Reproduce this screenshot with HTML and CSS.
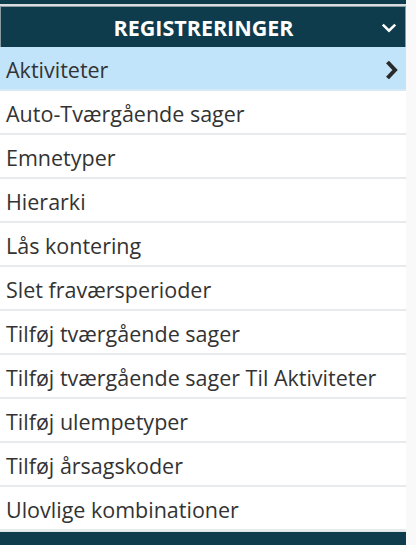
FILE: index.html
```html
<!DOCTYPE html>
<html>
<head>
<meta charset="utf-8">
<link rel="stylesheet" href="styles.css">
</head>
<body>
<div class="page">
  <div class="panel">
    <div class="topbar"></div>
    <div class="header">
      <span class="title">REGISTRERINGER</span>
      <svg class="chev-down" width="16" height="10" viewBox="0 0 16 10"><path d="M1.8 1.6 L8 7.6 L14.2 1.6" fill="none" stroke="#fff" stroke-width="2.6"/></svg>
    </div>
    <ul class="menu">
      <li class="item active"><span>Aktiviteter</span>
        <svg class="chev-right" width="13" height="20" viewBox="0 0 13 20"><path d="M2.5 2 L10 10 L2.5 18" fill="none" stroke="#2a2a2a" stroke-width="4"/></svg>
      </li>
      <li class="item"><span>Auto-Tværgående sager</span></li>
      <li class="item"><span>Emnetyper</span></li>
      <li class="item"><span>Hierarki</span></li>
      <li class="item"><span>Lås kontering</span></li>
      <li class="item"><span>Slet fraværsperioder</span></li>
      <li class="item"><span>Tilføj tværgående sager</span></li>
      <li class="item"><span>Tilføj tværgående sager Til Aktiviteter</span></li>
      <li class="item"><span>Tilføj ulempetyper</span></li>
      <li class="item"><span>Tilføj årsagskoder</span></li>
      <li class="item"><span>Ulovlige kombinationer</span></li>
    </ul>
    <div class="bottombar"></div>
  </div>
  <div class="side"></div>
</div>
</body>
</html>
```

FILE: styles.css
```css
html, body {
  margin: 0;
  padding: 0;
  background: #ffffff;
}
.page {
  display: flex;
  width: 416px;
  height: 545px;
  overflow: hidden;
}
.panel {
  width: 406px;
  flex: none;
  display: flex;
  flex-direction: column;
}
.side {
  flex: 1;
  background: #f9f9f9;
}
.topbar {
  height: 4px;
  background: #0e3c4d;
  border-bottom: 2px solid #d9dde0;
  box-sizing: content-box;
}
.header {
  height: 40px;
  background: #0e3c4d;
  border: 1px solid #8a9ba3;
  border-bottom: none;
  display: flex;
  align-items: center;
  justify-content: center;
  position: relative;
  font-family: "Open Sans", sans-serif;
}
.title {
  color: #ffffff;
  font-weight: 700;
  font-size: 21.5px;
  margin-left: 1px;
  padding-top: 1px;
}
.chev-down {
  position: absolute;
  right: 8px;
  top: 16px;
}
.menu {
  list-style: none;
  margin: 0;
  padding: 0;
  font-family: "Open Sans", sans-serif;
}
.item {
  border-bottom: 2px solid #e8ebee;
  display: flex;
  align-items: center;
  justify-content: space-between;
  padding: 2px 8px 0 6px;
  box-sizing: content-box;
  height: 40px;
  font-size: 21.5px;
  color: #333333;
}
.item.active {
  background: #c2e4fb;
  border-bottom-color: #d6e9f6;
}
.chev-right {
  margin-top: 1px;
}
.bottombar {
  flex: 1;
  background: #0e3c4d;
  border-top: 1px solid #dfe4e7;
}
```
